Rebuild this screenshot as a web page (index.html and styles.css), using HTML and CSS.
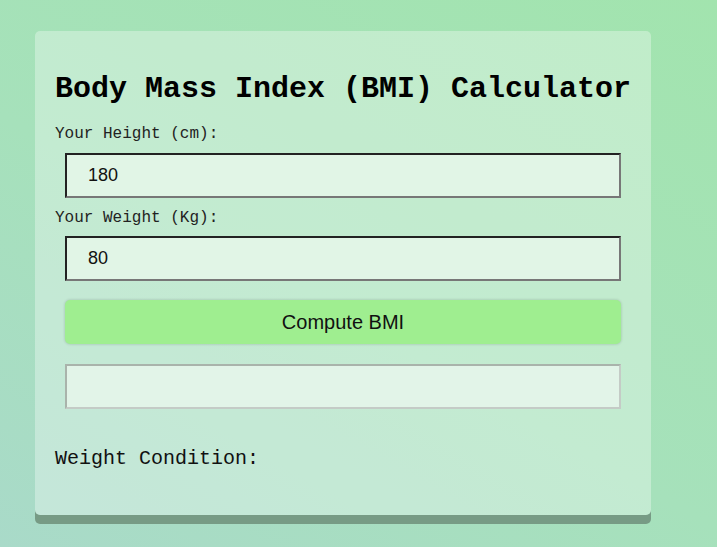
FILE: index.html
```html
<!DOCTYPE html>
<html>
<head>
<meta charset="utf-8">
<link rel="stylesheet" href="styles.css">
</head>
<body>
<div class="card">
  <h1 class="title">Body Mass Index (BMI) Calculator</h1>
  <label class="label">Your Height (cm):</label>
  <input class="field" type="text" value="180">
  <label class="label">Your Weight (Kg):</label>
  <input class="field" type="text" value="80">
  <button class="btn">Compute BMI</button>
  <div class="result"></div>
  <p class="condition">Weight Condition:</p>
</div>
</body>
</html>
```
FILE: styles.css
```css
html, body {
  margin: 0;
  padding: 0;
  height: 100%;
}
body {
  background: linear-gradient(30deg, #a9dac9 0%, #a6e1bb 45%, #a2e4ae 100%);
  font-family: "Courier New", "Liberation Mono", monospace;
  overflow: hidden;
}
.card {
  box-sizing: border-box;
  width: 616px;
  height: 484px;
  margin: 31px 0 0 35px;
  padding: 19px 20px 0 20px;
  border-radius: 5px;
  background: rgba(255, 255, 255, 0.33);
  box-shadow: 0 9px 0 #779b85;
  display: flex;
  flex-direction: column;
  align-items: flex-start;
}
.title {
  font-size: 30px;
  font-weight: bold;
  line-height: 34px;
  margin: 22px 0 0 0;
  color: #000;
  white-space: nowrap;
}
.label {
  font-size: 16px;
  line-height: 18px;
  color: #222;
  margin-top: 19px;
}
.label + .field {
  margin-top: 10px;
}
.field + .label {
  margin-top: 11px;
}
.field + .label + .field {
  margin-top: 9px;
}
.field {
  box-sizing: border-box;
  width: 556px;
  height: 45px;
  margin-left: 10px;
  padding: 0 0 0 21px;
  border: 2px solid;
  border-color: #222 #777 #777 #222;
  background: #e1f5e6;
  font-family: "Liberation Sans", Arial, sans-serif;
  font-size: 18px;
  color: #111;
  outline: none;
}
.btn {
  box-sizing: border-box;
  width: 556px;
  height: 44px;
  margin: 19px 0 0 10px;
  border: none;
  border-radius: 5px;
  background: #9fee90;
  box-shadow: 0 0 3px rgba(0, 0, 0, 0.2);
  font-family: "Liberation Sans", Arial, sans-serif;
  font-size: 20px;
  color: #111;
  cursor: pointer;
}
.result {
  box-sizing: border-box;
  width: 556px;
  height: 45px;
  margin: 20px 0 0 10px;
  border: 2px solid;
  border-color: #a9b3ab #c4cbc6 #c4cbc6 #a9b3ab;
  background: #e2f4e8;
}
.condition {
  font-size: 20px;
  line-height: 23px;
  margin: 38px 0 0 0;
  color: #111;
}
```
